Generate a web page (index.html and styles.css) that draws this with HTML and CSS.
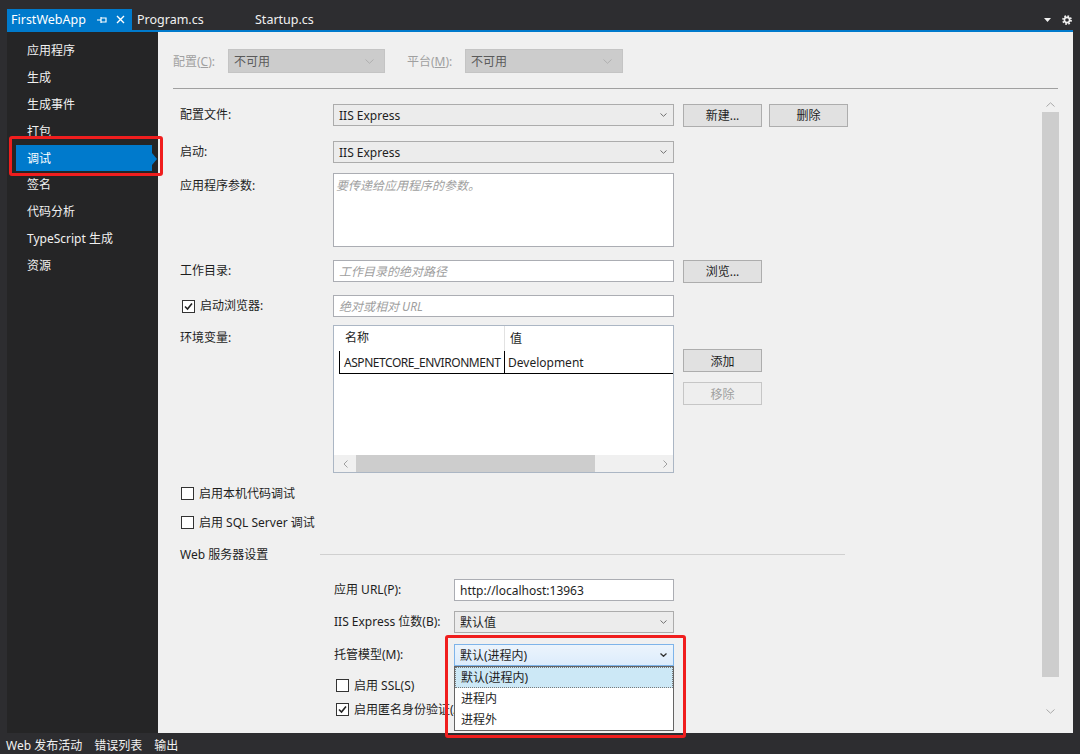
FILE: index.html
```html
<!DOCTYPE html>
<html lang="zh-CN">
<head>
<meta charset="utf-8">
<title>FirstWebApp</title>
<link rel="stylesheet" href="styles.css">
</head>
<body>
<div class="app">
  <header class="tabbar">
    <div class="tabstrip">
      <div class="tab active">
        <span class="tab-title">FirstWebApp</span>
        <svg class="pin" width="10" height="8" viewBox="0 0 10 8"><path d="M0 4H4M4 1V7M4 2H9V6H4" fill="none" stroke="#fff" stroke-width="1.2"/></svg>
        <svg class="close" width="9" height="9" viewBox="0 0 9 9"><path d="M1 1L8 8M8 1L1 8" stroke="#fff" stroke-width="1.4"/></svg>
      </div>
      <div class="tab plain">Program.cs</div>
      <div class="tab plain">Startup.cs</div>
      <div class="tab-tools">
        <svg width="7" height="4" viewBox="0 0 7 4"><path d="M0 0H7L3.5 4Z" fill="#f1f1f1"/></svg>
        <svg width="10" height="10" viewBox="0 0 10 10"><circle cx="5" cy="5" r="3.6" fill="none" stroke="#f1f1f1" stroke-width="2.6" stroke-dasharray="1.45 1.38"/><circle cx="5" cy="5" r="2.6" fill="none" stroke="#f1f1f1" stroke-width="1.6"/></svg>
      </div>
    </div>
  </header>

  <div class="main">
    <nav class="sidebar">
      <div class="nav-item">应用程序</div>
      <div class="nav-item">生成</div>
      <div class="nav-item">生成事件</div>
      <div class="nav-item">打包</div>
      <div class="nav-item selected">调试</div>
      <div class="nav-item">签名</div>
      <div class="nav-item">代码分析</div>
      <div class="nav-item">TypeScript 生成</div>
      <div class="nav-item">资源</div>
    </nav>

    <section class="content">
      <div class="config-row">
        <span class="cfg-label cfg-label-1">配置(<u>C</u>):</span>
        <div class="select disabled cfg-select-1"><span>不可用</span><svg class="chev" width="9" height="5" viewBox="0 0 9 5"><path d="M0.5 0.5L4.5 4.3L8.5 0.5" fill="none" stroke="#b0b0b0"/></svg></div>
        <span class="cfg-label cfg-label-2">平台(<u>M</u>):</span>
        <div class="select disabled cfg-select-2"><span>不可用</span><svg class="chev" width="9" height="5" viewBox="0 0 9 5"><path d="M0.5 0.5L4.5 4.3L8.5 0.5" fill="none" stroke="#b0b0b0"/></svg></div>
      </div>
      <div class="sep"></div>

      <div class="body">
        <div class="form">
          <div class="row">
            <div class="lbl">配置文件:</div>
            <div class="select field"><span>IIS Express</span><svg class="chev" width="7" height="4" viewBox="0 0 7 4"><path d="M0.5 0.5L3.5 3.3L6.5 0.5" fill="none" stroke="#707070"/></svg></div>
            <button class="btn">新建...</button>
            <button class="btn btn-gap">删除</button>
          </div>

          <div class="row r2">
            <div class="lbl">启动:</div>
            <div class="select field"><span>IIS Express</span><svg class="chev" width="7" height="4" viewBox="0 0 7 4"><path d="M0.5 0.5L3.5 3.3L6.5 0.5" fill="none" stroke="#707070"/></svg></div>
          </div>

          <div class="row top r3">
            <div class="lbl lbl-top">应用程序参数:</div>
            <div class="field textarea"><span class="ph">要传递给应用程序的参数。</span></div>
          </div>

          <div class="row r4">
            <div class="lbl">工作目录:</div>
            <div class="field input"><span class="ph">工作目录的绝对路径</span></div>
            <button class="btn">浏览...</button>
          </div>

          <div class="row r5">
            <div class="lbl lbl-check">
              <span class="cb checked"><svg width="11" height="11" viewBox="0 0 11 11"><path d="M2 5.5L4.5 8L9 2.5" fill="none" stroke="#222" stroke-width="1.6"/></svg></span>
              <span>启动浏览器:</span>
            </div>
            <div class="field input"><span class="ph">绝对或相对 URL</span></div>
          </div>

          <div class="row top r6">
            <div class="lbl lbl-top">环境变量:</div>
            <div class="env">
              <div class="env-head">
                <div class="env-gutter"></div>
                <div class="env-c1">名称</div>
                <div class="env-c2">值</div>
              </div>
              <div class="env-row">
                <div class="env-c1">ASPNETCORE_ENVIRONMENT</div>
                <div class="env-c2">Development</div>
              </div>
              <div class="env-fill"></div>
              <div class="hscroll">
                <svg class="harrow" width="5" height="8" viewBox="0 0 5 8"><path d="M4.5 0.5L1 4L4.5 7.5" fill="none" stroke="#a0a0a0"/></svg>
                <div class="hthumb"></div>
                <svg class="harrow harrow-r" width="5" height="8" viewBox="0 0 5 8"><path d="M0.5 0.5L4 4L0.5 7.5" fill="none" stroke="#a0a0a0"/></svg>
              </div>
            </div>
            <div class="env-btns">
              <button class="btn">添加</button>
              <button class="btn disabled">移除</button>
            </div>
          </div>

          <div class="row check-row cb1">
            <span class="cb"></span><span>启用本机代码调试</span>
          </div>
          <div class="row check-row cb2">
            <span class="cb"></span><span>启用 SQL Server 调试</span>
          </div>

          <div class="row section-head">
            <span class="section-title">Web 服务器设置</span>
            <span class="section-line"></span>
          </div>

          <div class="sub">
            <div class="row">
              <div class="sub-lbl">应用 URL(P):</div>
              <div class="field sub-field input"><span>http://localhost:13963</span></div>
            </div>
            <div class="row s2">
              <div class="sub-lbl">IIS Express 位数(B):</div>
              <div class="select field sub-field"><span>默认值</span><svg class="chev" width="7" height="4" viewBox="0 0 7 4"><path d="M0.5 0.5L3.5 3.3L6.5 0.5" fill="none" stroke="#707070"/></svg></div>
            </div>
            <div class="row s3">
              <div class="sub-lbl">托管模型(M):</div>
              <div class="combo">
                <div class="select field sub-field focused"><span>默认(进程内)</span><svg class="chev" width="7" height="4" viewBox="0 0 7 4"><path d="M0.5 0.5L3.5 3.3L6.5 0.5" fill="none" stroke="#333" stroke-width="1.3"/></svg></div>
                <ul class="dropdown">
                  <li class="opt hl">默认(进程内)</li>
                  <li class="opt">进程内</li>
                  <li class="opt">进程外</li>
                </ul>
              </div>
            </div>
            <div class="row check-row sub-check s4">
              <span class="cb"></span><span>启用 SSL(S)</span>
            </div>
            <div class="row check-row sub-check s5">
              <span class="cb checked"><svg width="11" height="11" viewBox="0 0 11 11"><path d="M2 5.5L4.5 8L9 2.5" fill="none" stroke="#222" stroke-width="1.6"/></svg></span><span>启用匿名身份验证(A)</span>
            </div>
          </div>
        </div>

        <div class="vscroll">
          <svg class="varrow" width="9" height="5" viewBox="0 0 9 5"><path d="M0.5 4.5L4.5 0.8L8.5 4.5" fill="none" stroke="#a8a8a8"/></svg>
          <div class="vthumb"></div>
          <svg class="varrow varrow-d" width="9" height="5" viewBox="0 0 9 5"><path d="M0.5 0.5L4.5 4.2L8.5 0.5" fill="none" stroke="#a8a8a8"/></svg>
        </div>
      </div>
    </section>
  </div>

  <footer class="statusbar">
    <span>Web 发布活动</span>
    <span>错误列表</span>
    <span>输出</span>
  </footer>

  <div class="annot annot-nav"></div>
  <div class="annot annot-host"></div>
</div>
</body>
</html>
```

FILE: styles.css
```css
* { box-sizing: border-box; }
html, body { margin: 0; height: 100%; }
body {
  background: #2d2d30;
  font-family: "Noto Sans", "Noto Sans CJK SC", sans-serif;
  font-size: 12px;
  color: #1e1e1e;
  overflow: hidden;
}
button { font: inherit; color: inherit; }
ul { margin: 0; padding: 0; list-style: none; }

.app {
  position: relative;
  width: 1080px;
  height: 754px;
  display: flex;
  flex-direction: column;
}

/* tab bar */
.tabbar { height: 32px; padding: 0 7px; flex: none; }
.tabstrip {
  height: 32px;
  display: flex;
  align-items: flex-end;
  border-bottom: 2px solid #007acc;
}
.tab {
  height: 21px;
  display: flex;
  align-items: center;
  color: #f1f1f1;
  font-size: 12.5px;
}
.tab.active {
  width: 125px;
  padding-left: 4px;
  background: #007acc;
  color: #fff;
}
.tab-title { flex: 1; }
.pin { margin-right: 9px; }
.close { margin-right: 7px; }
.tab.plain { width: 118px; padding-left: 5px; }
.tab-tools {
  margin-left: auto;
  height: 21px;
  display: flex;
  align-items: center;
  gap: 11px;
  padding-right: 1px;
}

/* main */
.main {
  flex: 1;
  min-height: 0;
  display: flex;
  padding: 0 7px;
}
.sidebar {
  width: 151px;
  flex: none;
  background: #252526;
  padding-top: 5px;
}
.nav-item {
  height: 26.9px;
  line-height: 27px;
  padding-left: 20px;
  color: #f1f1f1;
}
.nav-item.selected {
  position: relative;
  margin-left: 9px;
  width: 136px;
  padding-left: 11px;
  background: #007acc;
  color: #fff;
}
.nav-item.selected::after {
  content: "";
  position: absolute;
  right: -5px;
  top: 8px;
  border-left: 5px solid #007acc;
  border-top: 6px solid transparent;
  border-bottom: 6px solid transparent;
}

.content {
  flex: 1;
  min-width: 0;
  background: #f0f0f0;
  display: flex;
  flex-direction: column;
}

/* config row */
.config-row {
  height: 41px;
  padding: 17px 0 0 15px;
  display: flex;
  align-items: center;
  flex: none;
}
.cfg-label { color: #a0a0a0; }
.cfg-label-1 { width: 55px; }
.cfg-label-2 { width: 58px; margin-left: 22px; }
.cfg-select-1 { width: 157px; }
.cfg-select-2 { width: 158px; }
.select {
  height: 24px;
  display: flex;
  align-items: center;
  justify-content: space-between;
  padding: 0 6px 0 5px;
  border: 1px solid #acacac;
  background: #ececec;
}
.select.disabled {
  background: #cccccc;
  border-color: #c4c4c4;
  color: #5a5a5a;
  padding-right: 10px;
}
.sep {
  height: 1px;
  margin: 15px 15px 0;
  background: #a0a0a0;
  flex: none;
}

/* body */
.body { flex: 1; min-height: 0; display: flex; }
.form { flex: 1; padding: 15px 0 0 22px; }

.row { display: flex; align-items: center; height: 22px; }
.row.top { align-items: flex-start; }
.lbl { width: 153px; flex: none; line-height: 16px; }
.lbl-top { margin-top: 5px; }
.lbl-check { display: flex; align-items: center; gap: 5px; padding-left: 2px; }

.r2 { margin-top: 15px; }
.r3 { margin-top: 10px; height: 74px; }
.r4 { margin-top: 13px; }
.r5 { margin-top: 13px; }
.r6 { margin-top: 8px; height: 148px; }

.field {
  width: 341px;
  height: 22px;
  flex: none;
  border: 1px solid #abadb3;
  background: #fff;
}
.select.field { height: 22px; background: #ececec; border-color: #acacac; }
.input { display: flex; align-items: center; padding-left: 5px; }
.textarea { height: 74px; padding: 2px 2px; }
.ph { color: #a0a0a0; font-style: italic; }

.btn {
  width: 79px;
  height: 23px;
  flex: none;
  margin: 0 0 0 9px;
  padding: 0;
  border: 1px solid #adadad;
  background: #e1e1e1;
  color: #1e1e1e;
}
.btn-gap { margin-left: 7px; }
.btn.disabled {
  background: #eeeeee;
  border-color: #c6c6c6;
  color: #a0a0a0;
}

/* env table */
.env {
  width: 341px;
  height: 148px;
  flex: none;
  border: 1px solid #abb6c4;
  background: #fff;
  display: flex;
  flex-direction: column;
}
.env-head { height: 25px; display: flex; align-items: center; flex: none; }
.env-gutter { width: 5px; }
.env-head .env-c1 {
  width: 166px;
  height: 25px;
  line-height: 24px;
  padding-left: 6px;
  border-right: 1px solid #e2e2e2;
}
.env-head .env-c2 { padding-left: 5px; line-height: 24px; }
.env-row {
  height: 23px;
  margin-left: 5px;
  display: flex;
  border-left: 1px solid #000;
  border-bottom: 1px solid #000;
  flex: none;
}
.env-row .env-c1 {
  width: 165px;
  padding-left: 4px;
  line-height: 24px;
  border-right: 1px solid #000;
  letter-spacing: -0.45px;
  white-space: nowrap;
  overflow: hidden;
}
.env-row .env-c2 { padding-left: 3px; line-height: 24px; }
.env-fill { flex: 1; }
.hscroll {
  height: 17px;
  flex: none;
  display: flex;
  align-items: center;
  background: #f0f0f0;
}
.harrow { margin: 0 9px 0 9px; flex: none; }
.hthumb { width: 239px; height: 17px; background: #cdcdcd; margin-left: -1px; }
.harrow-r { margin-left: auto; margin-right: 5px; }
.env-btns { display: flex; flex-direction: column; gap: 10px; margin-top: 24px; }

/* checkboxes */
.cb {
  width: 13px;
  height: 13px;
  flex: none;
  border: 1px solid #333;
  background: #fff;
  display: flex;
  align-items: center;
  justify-content: center;
}
.cb svg { flex: none; }
.check-row { gap: 5px; padding-left: 1px; height: 13px; line-height: 16px; }
.cb1 { margin-top: 14px; }
.cb2 { margin-top: 16px; }

.section-head { margin-top: 17px; height: 16px; }
.section-title { width: 140px; flex: none; }
.section-line { width: 525px; height: 1px; background: #d0d0d0; }

/* sub settings */
.sub { padding-left: 154px; margin-top: 17px; }
.sub-lbl { width: 120px; flex: none; line-height: 16px; }
.sub-field { width: 220px; }
.s2 { margin-top: 10px; }
.s3 { margin-top: 11px; }
.s4 { margin-top: 13px; }
.s5 { margin-top: 11px; }
.sub-check { padding-left: 2px; }

.combo { position: relative; }
.select.focused {
  background: linear-gradient(#ecf4fc, #dcecfc);
  border-color: #7eb4ea;
}
.dropdown {
  position: absolute;
  left: 0;
  top: 22px;
  width: 220px;
  height: 65px;
  z-index: 2;
  background: #fff;
  border: 1px solid #646464;
  padding: 0;
}
.opt {
  height: 21px;
  line-height: 19px;
  padding-left: 5px;
  border: 1px solid transparent;
}
.opt.hl {
  background: #cce8f6;
  border: 1px dotted #7a7a7a;
}

/* vertical scrollbar */
.vscroll {
  width: 17px;
  margin-right: 14px;
  flex: none;
  display: flex;
  flex-direction: column;
  align-items: center;
  padding-top: 13px;
}
.varrow { flex: none; }
.vthumb { width: 17px; height: 565px; margin-top: 5px; background: #cdcdcd; flex: none; }
.varrow-d { margin-top: 32px; }

/* status bar */
.statusbar {
  height: 21px;
  flex: none;
  padding: 5px 0 0 6px;
  display: flex;
  gap: 12px;
  color: #f1f1f1;
  line-height: 16px;
  overflow: hidden;
}

/* annotations */
.annot {
  position: absolute;
  border: 3px solid #f01e1e;
  border-radius: 3px;
  z-index: 5;
  pointer-events: none;
}
.annot-nav { left: 9px; top: 136px; width: 154px; height: 40px; }
.annot-host { left: 445px; top: 635px; width: 241px; height: 103px; }
```
